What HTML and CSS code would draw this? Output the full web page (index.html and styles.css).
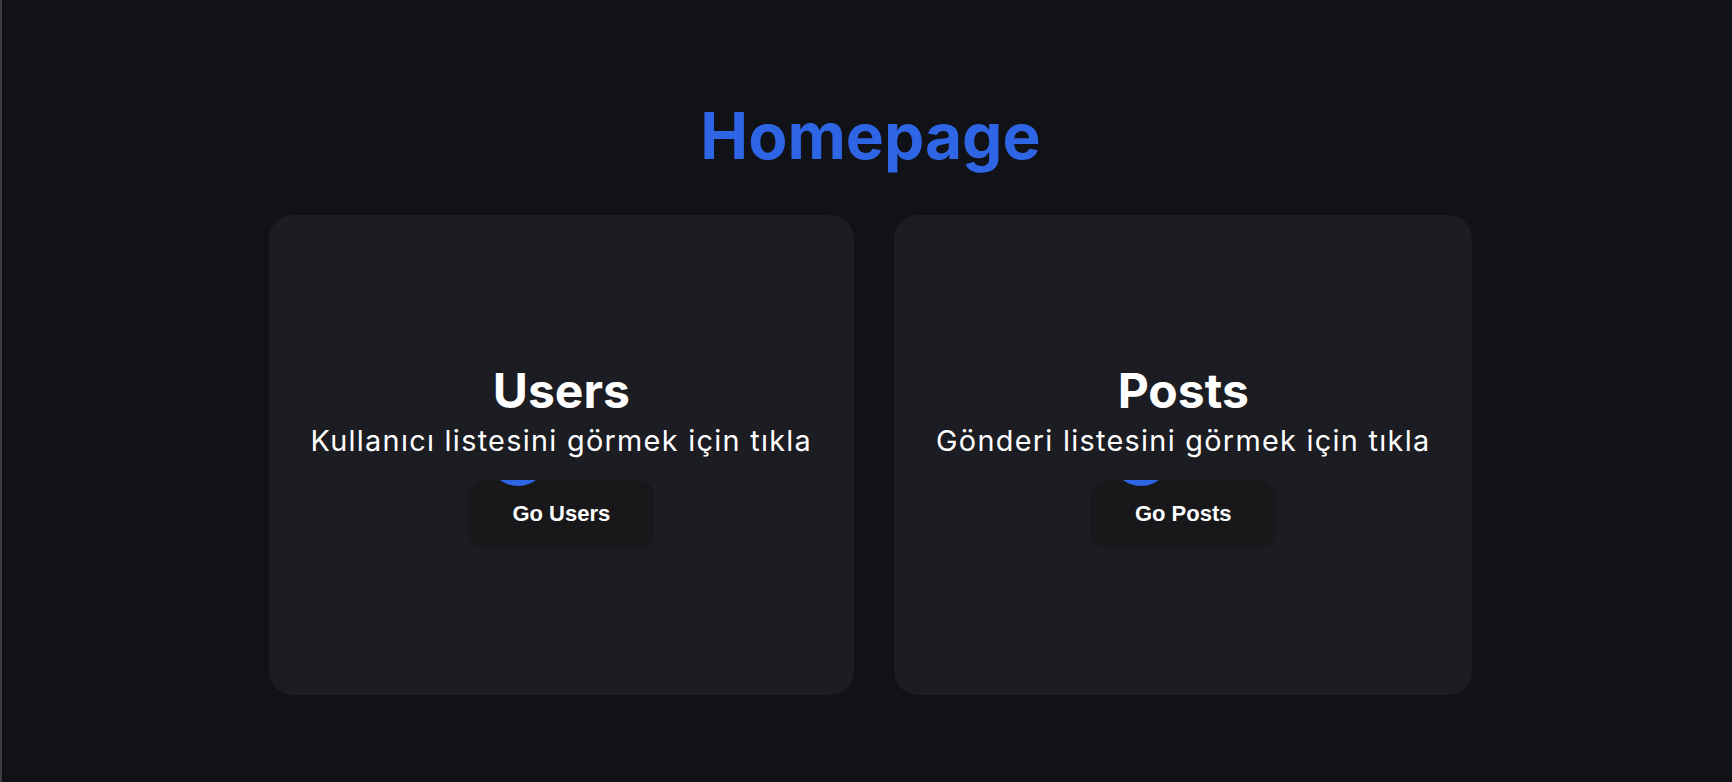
FILE: index.html
```html
<!DOCTYPE html>
<html lang="tr">
<head>
    <meta charset="UTF-8">
    <title>Homepage</title>
    <link rel="stylesheet" href="styles.css">
</head>
<body>
    <div class="page">
        <h1 class="page-title">Homepage</h1>

        <div class="cards">
            <div class="card">
                <h2 class="card-title">Users</h2>
                <p class="card-text">Kullanıcı listesini görmek için tıkla</p>
                <button class="btn">Go Users</button>
            </div>

            <div class="card">
                <h2 class="card-title">Posts</h2>
                <p class="card-text">Gönderi listesini görmek için tıkla</p>
                <button class="btn">Go Posts</button>
            </div>
        </div>
    </div>
</body>
</html>
```

FILE: styles.css
```css
body {
    margin: 0;
    min-height: 782px;
    background-color: #111217;
    border-left: 2px solid #3c3d42;
    padding-left: 7px;
    font-family: Inter, "Noto Sans", sans-serif;
    color: #ffffff;
    box-sizing: border-box;
}

.page {
    display: flex;
    flex-direction: column;
    align-items: center;
    padding-top: 97px;
}

.page-title {
    margin: 0 0 41px;
    font-size: 64px;
    font-weight: 700;
    line-height: 77px;
    color: #2d65e5;
}

.cards {
    display: flex;
    gap: 40px;
}

.card {
    display: flex;
    flex-direction: column;
    align-items: center;
    justify-content: center;
    height: 480px;
    padding: 0 42px;
    background-color: #1c1d22;
    border-radius: 24px;
    box-sizing: border-box;
}

.card-title {
    margin: 0;
    font-size: 48px;
    font-weight: 700;
    line-height: 58px;
}

.card-text {
    margin: 3px 0 22px;
    font-size: 28.8px;
    font-weight: 400;
    line-height: 35px;
    letter-spacing: 1.3px;
}

.btn {
    position: relative;
    overflow: hidden;
    padding: 21px 44px;
    background-color: #18181a;
    color: #ffffff;
    border: none;
    border-radius: 16px;
    font-family: "Liberation Sans", Arial, sans-serif;
    font-size: 22px;
    font-weight: 700;
    line-height: 26px;
    cursor: pointer;
}

.btn::before {
    content: "";
    position: absolute;
    top: -54px;
    left: 20px;
    width: 60px;
    height: 60px;
    border-radius: 50%;
    background-color: #2d65e5;
}
```
